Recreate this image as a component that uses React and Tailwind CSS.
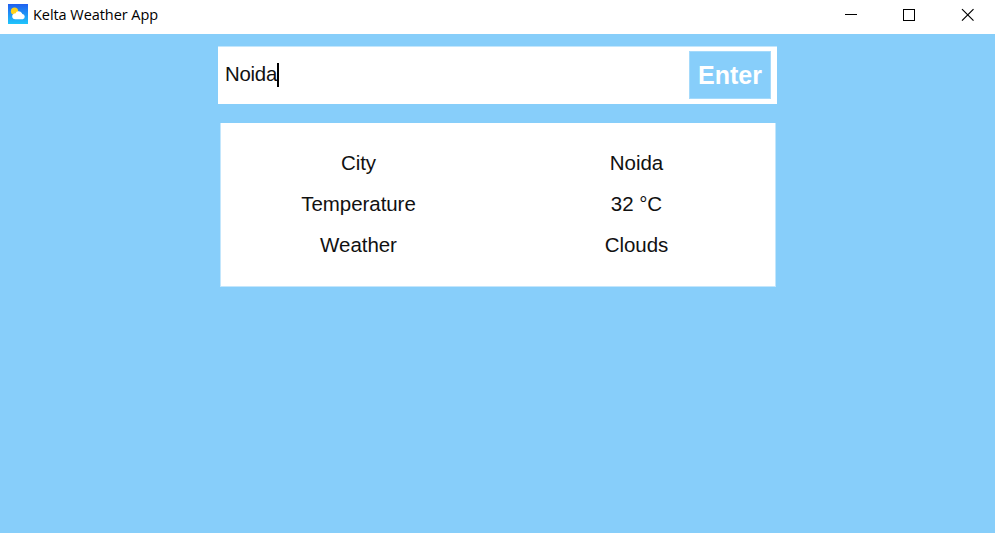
const rows = [
  ["City", "Noida"],
  ["Temperature", "32 °C"],
  ["Weather", "Clouds"],
];

function WeatherIcon() {
  return (
    <svg className="mt-[4px] h-5 w-5" viewBox="0 0 20 20">
      <defs>
        <linearGradient id="sky" x1="0" y1="0" x2="0" y2="1">
          <stop offset="0" stopColor="#2060f0" />
          <stop offset="1" stopColor="#1fc5fb" />
        </linearGradient>
      </defs>
      <rect width="20" height="20" fill="url(#sky)" />
      <circle cx="6.500" cy="7.200" r="3.600" fill="#ffd21c" />
      <path d="M7 15.200a2.900 2.900 0 0 1-1.600-5.300c.8-.6 1.400-.5 2-.5A3.600 3.600 0 0 1 13.800 9c.4.500.3 1 .6 1.100a2.600 2.600 0 0 1 .4 5.100z" fill="#fff" />
    </svg>
  );
}

function TitleBar() {
  return (
    <header className="flex h-[34px] justify-between bg-white pl-2">
      <div className="flex gap-[5px]">
        <WeatherIcon />
        <h1 className="mt-[5px] font-['Open_Sans','Noto_Sans',sans-serif] text-[14.5px] leading-5 tracking-[-0.06px] text-black">Kelta Weather App</h1>
      </div>
      <svg className="h-[30px] w-[150px]" viewBox="0 0 150 30" fill="none" stroke="#000">
        <path d="M0 14.500h12" />
        <rect x="58.500" y="9.500" width="11" height="11" />
        <path d="M117 9.200l11.500 11.500M128.500 9.200l-11.500 11.500" strokeWidth="1.200" />
      </svg>
    </header>
  );
}

export default function App() {
  return (
    <div className="flex h-[533px] w-[995px] flex-col bg-[#87cefa] font-['Liberation_Sans',Arial,sans-serif] text-[#111]">
      <TitleBar />
      <main className="flex flex-col">
        <form className="mt-[12px] ml-[218px] flex h-[58px] w-[559px] items-center justify-between border-t border-[#c3e6fc] bg-white pr-[6px] pb-px pl-[7px]">
          <div className="flex items-center text-[20.4px] tracking-[-0.25px]">
            <span className="-mt-px">Noida</span>
            <span className="h-6 w-[2px] bg-black" />
          </div>
          <button type="button" className="h-[48px] w-[82px] border border-[#a5dafb] bg-[#87cefa] pt-[2px] text-[25px] font-bold text-white">Enter</button>
        </form>
        <section className="mt-[19px] ml-[220px] grid h-[164px] w-[556px] grid-cols-2 content-start border-x border-b border-[#c3e6fc] bg-white pt-[19px] text-center text-[20.5px] leading-[41px] tracking-[-0.05px]">
          {rows.map(([label, value]) => (
            <div key={label} className="contents">
              <span className="pr-[2px]">{label}</span>
              <span>{value}</span>
            </div>
          ))}
        </section>
      </main>
    </div>
  );
}
